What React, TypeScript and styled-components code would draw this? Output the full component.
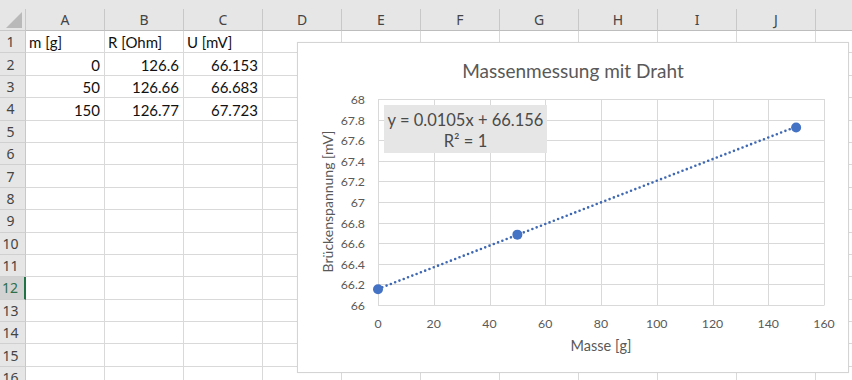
import React from 'react';
import styled, { createGlobalStyle } from 'styled-components';

const GlobalStyle = createGlobalStyle`
    html, body {
        margin: 0;
        padding: 0;
        background: #ffffff;
    }
`;

const Page = styled.div`
    position: relative;
    width: 852px;
    height: 380px;
    overflow: hidden;
    background: #ffffff;
    font-family: Lato, "Liberation Sans", sans-serif;
`;

const Sheet = styled.div`
    display: grid;
    grid-template-columns: 26px repeat(11, 79px);
    grid-template-rows: 9px 22px repeat(16, 22.4px);
`;

const TopBand = styled.div`
    grid-column: 1 / -1;
    background: #e6e6e6;
`;

const Corner = styled.div`
    display: flex;
    align-items: flex-end;
    justify-content: flex-end;
    padding: 0 3px 2px 0;
    box-sizing: border-box;
    background: #e6e6e6;
    border-right: 1px solid #c8c8c8;
    border-bottom: 1px solid #c8c8c8;
`;

const CornerMark = styled.div`
    width: 16px;
    height: 16px;
    background: #b9b9b9;
    clip-path: polygon(100% 0, 100% 100%, 0 100%);
`;

const ColHead = styled.div`
    display: flex;
    align-items: center;
    justify-content: center;
    box-sizing: border-box;
    background: #e6e6e6;
    border-right: 1px solid #c8c8c8;
    border-bottom: 1px solid #bdbdbd;
    font-family: "Noto Sans", "Open Sans", sans-serif;
    font-size: 14px;
    color: #444444;
`;

const RowHead = styled.div<{ $active?: boolean }>`
    display: flex;
    align-items: center;
    justify-content: center;
    padding-right: 4px;
    box-sizing: border-box;
    background: ${p => (p.$active ? '#d2d2d2' : '#e6e6e6')};
    border-right: ${p => (p.$active ? '2px solid #217346' : '1px solid #c8c8c8')};
    border-bottom: 1px solid #d0d0d0;
    font-family: "Noto Sans", "Open Sans", sans-serif;
    font-size: 14px;
    color: ${p => (p.$active ? '#2e6e4a' : '#444444')};
`;

const Cell = styled.div<{ $num?: boolean }>`
    display: flex;
    align-items: flex-end;
    justify-content: ${p => (p.$num ? 'flex-end' : 'flex-start')};
    padding: 0 4px 1px 3px;
    box-sizing: border-box;
    border-right: 1px solid #d9d9d9;
    border-bottom: 1px solid #d9d9d9;
    font-size: 15px;
    line-height: 18px;
    color: #111111;
    white-space: nowrap;
`;

const ChartFrame = styled.div`
    position: absolute;
    left: 297px;
    top: 42px;
    width: 552px;
    height: 331px;
    box-sizing: border-box;
    background: #ffffff;
    border: 1px solid #d4d4d4;
    box-shadow: 0 0 1px rgba(0, 0, 0, 0.08);
`;

const ChartSvg = styled.svg`
    display: block;
    width: 550px;
    height: 329px;
    font-family: Lato, "Liberation Sans", sans-serif;
`;

const cols = ['A', 'B', 'C', 'D', 'E', 'F', 'G', 'H', 'I', 'J', ''];

const data: (string | number)[][] = [
    ['m [g]', 'R [Ohm]', 'U [mV]'],
    [0, 126.6, 66.153],
    [50, 126.66, 66.683],
    [150, 126.77, 67.723],
];

const points = [
    { x: 0, y: 66.153 },
    { x: 50, y: 66.683 },
    { x: 150, y: 67.723 },
];

// plot area inside the chart
const X0 = 80;
const X1 = 526;
const Y0 = 262;
const Y1 = 56;
const px = (x: number) => X0 + (x / 160) * (X1 - X0);
const py = (y: number) => Y0 - ((y - 66) / 2) * (Y0 - Y1);

const xTicks = [0, 20, 40, 60, 80, 100, 120, 140, 160];
const yTicks = [66, 66.2, 66.4, 66.6, 66.8, 67, 67.2, 67.4, 67.6, 67.8, 68];

const Chart = () => {
    const trend = (x: number) => 0.0105 * x + 66.156;
    return (
        <ChartFrame>
            <ChartSvg viewBox="0 0 550 329">
                <text x={275} y={27} textAnchor="middle" dominantBaseline="central" fontSize={19} fill="#595959">
                    Massenmessung mit Draht
                </text>

                {yTicks.map(t => (
                    <line key={'h' + t} x1={X0} x2={X1} y1={Math.round(py(t)) + 0.5} y2={Math.round(py(t)) + 0.5} stroke="#d9d9d9" strokeWidth={1} />
                ))}
                {xTicks.map(t => (
                    <line key={'v' + t} x1={Math.round(px(t)) + 0.5} x2={Math.round(px(t)) + 0.5} y1={Y1} y2={Y0 + 0.5} stroke="#d9d9d9" strokeWidth={1} />
                ))}

                {yTicks.map(t => (
                    <text key={'yl' + t} x={67} y={py(t) + 0.5} textAnchor="end" dominantBaseline="central" fontSize={12.3} fill="#595959">
                        {String(Math.round(t * 10) / 10)}
                    </text>
                ))}
                {xTicks.map(t => (
                    <text key={'xl' + t} x={px(t)} y={280.5} textAnchor="middle" dominantBaseline="central" fontSize={12.3} fill="#595959">
                        {t}
                    </text>
                ))}

                <text x={303} y={302} textAnchor="middle" dominantBaseline="central" fontSize={14.5} fill="#595959">
                    Masse [g]
                </text>
                <text
                    x={29}
                    y={158.5}
                    textAnchor="middle"
                    dominantBaseline="central"
                    fontSize={14}
                    fill="#595959"
                    transform="rotate(-90 29 158.5)"
                >
                    Brückenspannung [mV]
                </text>

                <line
                    x1={px(0)}
                    y1={py(trend(0))}
                    x2={px(150)}
                    y2={py(trend(150))}
                    stroke="#3f68b3"
                    strokeWidth={2.6}
                    strokeLinecap="round"
                    strokeDasharray="0 4.6"
                />
                {points.map(p => (
                    <circle key={p.x} cx={px(p.x)} cy={py(p.y)} r={5} fill="#4472c4" />
                ))}

                <rect x={86} y={62} width={163} height={48} fill="#e7e6e6" />
                <text x={167.5} y={76.5} textAnchor="middle" dominantBaseline="central" fontSize={16.5} fill="#4a4a4a">
                    y = 0.0105x + 66.156
                </text>
                <text x={167.5} y={98} textAnchor="middle" dominantBaseline="central" fontSize={16.5} fill="#4a4a4a">
                    R² = 1
                </text>
            </ChartSvg>
        </ChartFrame>
    );
};

export default function App() {
    const rows = Array.from({ length: 16 }, (_, i) => i + 1);
    return (
        <Page>
            <GlobalStyle />
            <Sheet>
                <TopBand />
                <Corner>
                    <CornerMark />
                </Corner>
                {cols.map((c, i) => (
                    <ColHead key={i}>{c}</ColHead>
                ))}
                {rows.map(r => (
                    <React.Fragment key={r}>
                        <RowHead $active={r === 12}>{r}</RowHead>
                        {cols.map((c, ci) => {
                            const v = data[r - 1]?.[ci];
                            return (
                                <Cell key={ci} $num={typeof v === 'number'}>
                                    {v !== undefined ? String(v) : ''}
                                </Cell>
                            );
                        })}
                    </React.Fragment>
                ))}
            </Sheet>
            <Chart />
        </Page>
    );
}
